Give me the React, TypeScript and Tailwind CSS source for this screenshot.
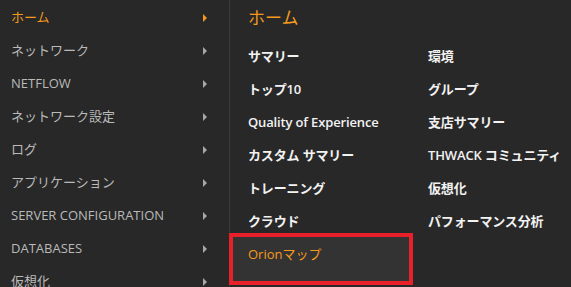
import React from "react";

const leftItems = [
  "ホーム",
  "ネットワーク",
  "NETFLOW",
  "ネットワーク設定",
  "ログ",
  "アプリケーション",
  "SERVER CONFIGURATION",
  "DATABASES",
  "仮想化",
];

const col1 = ["サマリー", "トップ10", "Quality of Experience", "カスタム サマリー", "トレーニング", "クラウド"];
const col2 = ["環境", "グループ", "支店サマリー", "THWACK コミュニティ", "仮想化", "パフォーマンス分析"];

function Arrow({ active }: { active: boolean }) {
  return (
    <span
      className={
        active
          ? "block w-0 h-0 border-y-[4px] border-y-transparent border-l-[4px] border-l-[#f39a1e]"
          : "block w-0 h-0 border-y-[4px] border-y-transparent border-l-[4px] border-l-[#a8a8a8]"
      }
    />
  );
}

export default function App() {
  return (
    <div
      className="w-[571px] h-[287px] overflow-hidden bg-[#282828] flex"
      style={{ fontFamily: '"Open Sans", "Noto Sans CJK JP", sans-serif' }}
    >
      <div className="w-[229px] shrink-0 flex flex-col pt-[1px]">
        {leftItems.map((t, i) => (
          <div key={i} className="h-[33px] shrink-0 flex items-center pl-[11px] pr-[22px] justify-between">
            <span className={i === 0 ? "text-[13px] text-[#f39a1e]" : "text-[13px] text-[#bababa]"}>{t}</span>
            <Arrow active={i === 0} />
          </div>
        ))}
      </div>
      <div className="flex-1 border-l border-[#3a3a3a] flex flex-col">
        <div className="h-[40px] pl-[18px] pt-[6px] text-[17px] leading-[24px] text-[#f39a1e]">ホーム</div>
        <div className="flex">
          <div className="w-[183px] flex flex-col">
            {col1.map((t, i) => (
              <div key={i} className="h-[33px] flex items-center pl-[18px] text-[13px] font-semibold tracking-[-0.15px] text-[#f2f2f2]">
                {t}
              </div>
            ))}
            <div className="-mt-[5px] -ml-px w-[184px] h-[52px] border-4 border-[#e8202a] bg-[#333333] pl-[15px] pt-[7px] text-[13px] leading-[20px] text-[#f39a1e]">
              Orionマップ
            </div>
          </div>
          <div className="flex flex-col">
            {col2.map((t, i) => (
              <div key={i} className="h-[33px] flex items-center pl-[15px] text-[13px] font-semibold tracking-[-0.15px] text-[#f2f2f2] whitespace-nowrap">
                {t}
              </div>
            ))}
          </div>
        </div>
      </div>
    </div>
  );
}
